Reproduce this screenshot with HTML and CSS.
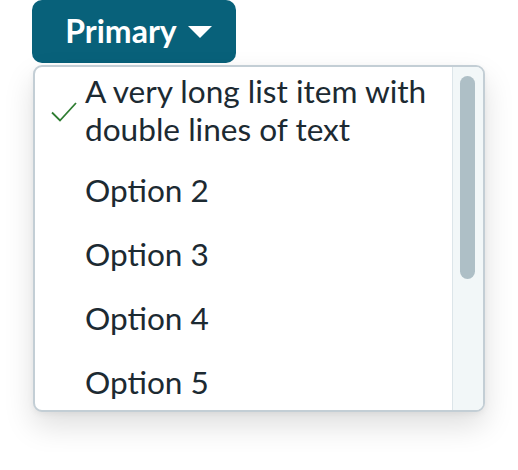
FILE: index.html
```html
<!DOCTYPE html>
<html>
<head>
<meta charset="utf-8">
<link rel="stylesheet" href="styles.css">
</head>
<body>
<div class="wrap">
  <button class="btn">Primary <svg class="caret" width="26" height="14" viewBox="0 0 26 14"><path d="M1 1 H25 L13 13 Z" fill="#fff"/></svg></button>
  <div class="menu">
    <ul class="list">
      <li class="item first">
        <span class="icon"><svg width="28" height="22" viewBox="0 0 28 22"><path d="M2 11.5 L10 19.5 L26 2" fill="none" stroke="#2f7d32" stroke-width="1.8"/></svg></span>
        <span class="label">A very long list item with double lines of text</span>
      </li>
      <li class="item"><span class="icon"></span><span class="label">Option 2</span></li>
      <li class="item"><span class="icon"></span><span class="label">Option 3</span></li>
      <li class="item"><span class="icon"></span><span class="label">Option 4</span></li>
      <li class="item"><span class="icon"></span><span class="label">Option 5</span></li>
    </ul>
    <div class="track"><div class="thumb"></div></div>
  </div>
</div>
</body>
</html>
```
FILE: styles.css
```css
html, body {
  margin: 0;
  padding: 0;
  background: #fff;
}
body {
  font-family: Lato, "Noto Sans", sans-serif;
  color: #1c2a32;
}
.wrap {
  padding-left: 32px;
  padding-bottom: 40px;
}
.btn {
  display: flex;
  align-items: center;
  justify-content: center;
  gap: 10px;
  width: 204px;
  height: 63px;
  border: none;
  border-radius: 10px;
  background: #08617a;
  color: #fff;
  font-family: Lato, sans-serif;
  font-size: 32px;
  font-weight: 700;
  padding: 0 0 2px 10px;
  margin: 0;
}
.caret {
  display: block;
  margin-top: 2px;
}
.menu {
  margin-top: 2px;
  margin-left: 1px;
  width: 452px;
  height: 347px;
  box-sizing: border-box;
  border: 2px solid #c3ced5;
  border-radius: 9px;
  background: #fff;
  display: flex;
  overflow: hidden;
  box-shadow: 0 14px 30px rgba(0, 0, 0, 0.13), 0 2px 6px rgba(0, 0, 0, 0.05);
}
.list {
  list-style: none;
  margin: 0;
  padding: 0;
  flex: 1;
  overflow: hidden;
}
.item {
  display: flex;
  align-items: center;
  padding: 13px 0;
  font-size: 31.6px;
  line-height: 38px;
}
.item.first {
  padding: 5px 0 10px 0;
}
.icon {
  width: 50px;
  flex: none;
  display: flex;
  justify-content: flex-end;
  padding-right: 7px;
  box-sizing: border-box;
}
.icon svg {
  display: block;
  margin-top: 3px;
}
.label {
  flex: 1;
  padding-right: 12px;
}
.track {
  width: 31px;
  flex: none;
  background: #f2f7f8;
  border-left: 1px solid #dce5e9;
  padding-top: 9px;
  box-sizing: border-box;
}
.thumb {
  width: 15px;
  height: 203px;
  margin-left: 7px;
  border-radius: 8px;
  background: #aebfc6;
}
```
